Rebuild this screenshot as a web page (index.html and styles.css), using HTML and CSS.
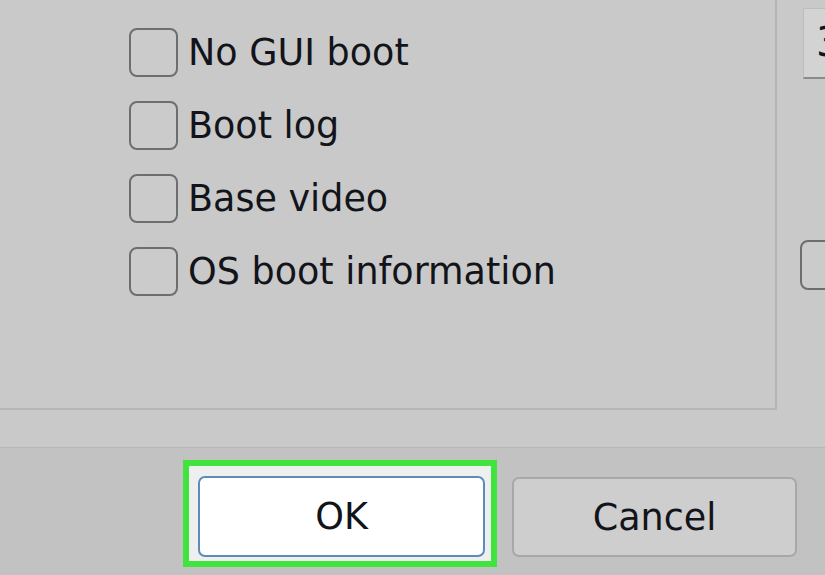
FILE: index.html
```html
<!DOCTYPE html>
<html>
<head>
<meta charset="utf-8">
<link rel="stylesheet" href="styles.css">
</head>
<body>
<div class="main">
  <div class="group">
    <div class="options">
      <label class="opt"><span class="box"></span><span class="lbl">No GUI boot</span></label>
      <label class="opt"><span class="box"></span><span class="lbl">Boot log</span></label>
      <label class="opt"><span class="box"></span><span class="lbl">Base video</span></label>
      <label class="opt"><span class="box"></span><span class="lbl">OS boot information</span></label>
    </div>
  </div>
  <div class="side">
    <div class="textbox">3</div>
    <span class="box side-box"></span>
  </div>
</div>
<div class="footer">
  <div class="highlight">
    <button class="btn btn-ok">OK</button>
  </div>
  <button class="btn btn-cancel">Cancel</button>
</div>
</body>
</html>
```
FILE: styles.css
```css
html, body {
  margin: 0;
  padding: 0;
}
body {
  width: 825px;
  height: 575px;
  overflow: hidden;
  background: #c9c9c9;
  font-family: "DejaVu Sans", "Liberation Sans", sans-serif;
  color: #12141a;
}
.main {
  display: flex;
  height: 447px;
  border-bottom: 1px solid #b6b6b6;
  box-sizing: content-box;
}
.group {
  flex: none;
  width: 777px;
  height: 410px;
  box-sizing: border-box;
  border-right: 2px solid #b5b5b5;
  border-bottom: 2px solid #b5b5b5;
  padding: 28px 0 0 129px;
}
.options {
  display: flex;
  flex-direction: column;
  gap: 24px;
}
.opt {
  display: flex;
  align-items: center;
  height: 49px;
}
.box {
  display: block;
  width: 49px;
  height: 49px;
  box-sizing: border-box;
  border: 2px solid #6e6e6e;
  border-radius: 8px;
  background: #cbcbcb;
  flex: none;
}
.lbl {
  margin-left: 10px;
  font-size: 36.5px;
  line-height: 1;
  margin-top: 2px;
}
.side {
  flex: none;
  width: 48px;
  display: flex;
  flex-direction: column;
  align-items: flex-start;
  padding: 8px 0 0 23px;
  overflow: hidden;
}
.textbox {
  margin-left: 3px;
  width: 60px;
  height: 71px;
  flex: none;
  box-sizing: border-box;
  background: #d3d3d3;
  border: 1px solid #bdbdbd;
  border-bottom: 2px solid #8c8c8c;
  border-right: none;
  padding-left: 12px;
  font-size: 40px;
  line-height: 66px;
}
.side-box {
  margin-top: 161px;
  width: 50px;
  height: 50px;
}
.footer {
  display: flex;
  align-items: flex-start;
  height: 127px;
  background: #c2c2c2;
  padding: 12px 0 0 183px;
  box-sizing: border-box;
}
.highlight {
  border: 6px solid #41e33f;
  background: #eef0f0;
  padding: 10px 6px 4px 9px;
}
.btn {
  display: block;
  font-family: "DejaVu Sans", "Liberation Sans", sans-serif;
  font-size: 36.5px;
  color: #12141a;
  box-sizing: border-box;
  border-radius: 7px;
  padding: 0;
  margin: 0;
}
.btn-ok {
  width: 287px;
  height: 81px;
  background: #ffffff;
  border: 2px solid #5b8db8;
}
.btn-cancel {
  margin-left: 15px;
  margin-top: 17px;
  width: 285px;
  height: 80px;
  background: #cecece;
  border: 2px solid #a8a8a8;
}
```
